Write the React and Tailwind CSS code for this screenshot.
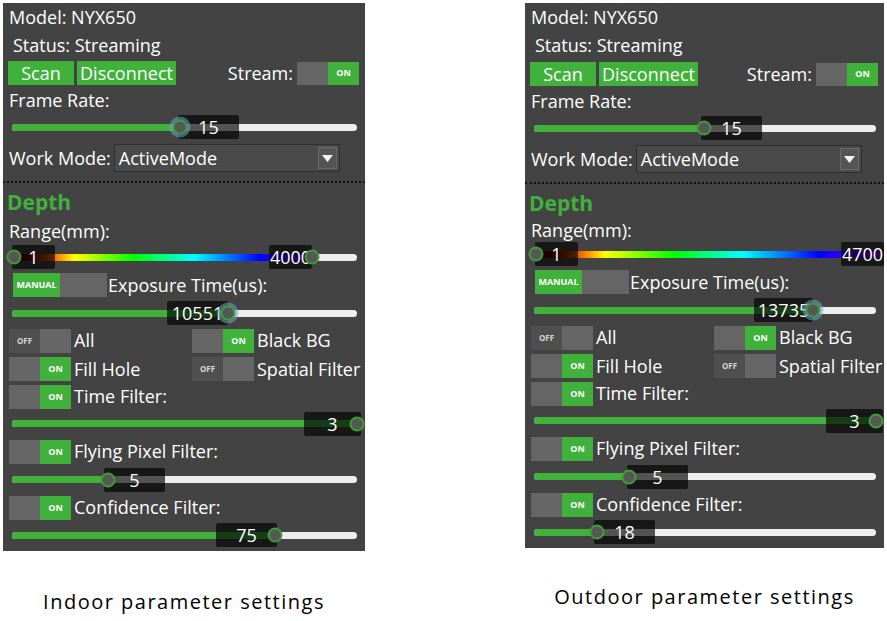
import React from 'react';

const GREEN = 'bg-[#40b13a]';

const LEFT = {
  w: 'w-[362px]',
  statusH: 'h-[28px]',
  depthH: 'h-[30px]',
  rangeH: 'h-[26px]',
  captionMt: 'mt-[36px]',
  frame: { pct: 48.7, box: 166, value: '15', glow: true },
  range: { to: 87, boxA: 0, boxB: 257, a: '1', b: '4000', showB: true },
  exposure: { pct: 62.6, box: 155, value: '10551', glow: true },
  time: { pct: 100, box: 292, value: '3', boxW: 57 },
  flying: { pct: 27.8, box: 92, value: '5' },
  confidence: { pct: 76.2, box: 204, value: '75' },
};

const RIGHT = {
  w: 'w-[359px]',
  statusH: 'h-[29px]',
  depthH: 'h-[30px]',
  rangeH: 'h-[22px]',
  captionMt: 'mt-[34px]',
  frame: { pct: 49.7, box: 167, value: '15' },
  range: { to: 101, boxA: 1, boxB: 307, a: '1', b: '4700', showB: false },
  exposure: { pct: 81.7, box: 220, value: '13735', glow: true, boxW: 59 },
  time: { pct: 100, box: 292, value: '3', boxW: 57 },
  flying: { pct: 27.9, box: 93, value: '5' },
  confidence: { pct: 18.3, box: 60, value: '18' },
};

// ─── SMALL PIECES ────────────────────────────────────────────────────────────
const Toggle = ({ on }) => (
  <div className="flex h-[24px] w-[62px] shrink-0">
    {on ? (
      <>
        <div className="flex-1 bg-[#656565]" />
        <div className={`flex-1 ${GREEN} flex items-center justify-center text-[9px] font-bold text-white`}>ON</div>
      </>
    ) : (
      <>
        <div className="flex-1 bg-[#4f4f4f] flex items-center justify-center text-[8px] font-bold text-[#d6d6d6]">OFF</div>
        <div className="flex-1 bg-[#666666]" />
      </>
    )}
  </div>
);

const Thumb = ({ left, glow }) => (
  <div
    className={`absolute top-1/2 -translate-x-1/2 -translate-y-1/2 w-[15px] h-[15px] rounded-full bg-[#575757] border-2 border-[#3b9f35]
      ${glow ? 'shadow-[0_0_0_3px_rgba(110,160,210,0.55)]' : ''}`}
    style={{ left: `${left}%` }}
  />
);

const ValueBox = ({ left, width = 61, children }) => (
  <div
    className="absolute top-1/2 -translate-y-1/2 h-[24px] rounded-[2px] bg-black/65 text-center leading-[24px] text-[18px] text-white whitespace-nowrap"
    style={{ left: `${left}px`, width: `${width}px` }}
  >
    {children}
  </div>
);

const Slider = ({ s, h = 'h-[26px]' }) => (
  <div className={`${h} flex items-center`}>
    <div className="relative ml-[9px] mr-[8px] flex-1 h-[7px] rounded-full bg-[#eeeeee]">
      <div className={`absolute left-0 top-0 h-full rounded-full ${GREEN}`} style={{ width: `${s.pct}%` }} />
      <ValueBox left={s.box} width={s.boxW}>{s.value}</ValueBox>
      <Thumb left={s.pct} glow={s.glow} />
    </div>
  </div>
);

const RangeSlider = ({ r }) => (
  <div className="h-[26px] flex items-center">
    <div className="relative ml-[9px] mr-[8px] flex-1 h-[7px] rounded-full bg-[#eeeeee]">
      <div
        className="absolute left-[2px] top-0 h-full bg-[linear-gradient(to_right,#3a0000_0%,#7a0a00_6%,#ff7a00_14%,#ffff00_20%,#00ff00_40%,#00ffff_60%,#0000ff_82%,#8000ff_100%)]"
        style={{ width: `${r.to}%` }}
      />
      <ValueBox left={r.boxA} width={43}>{r.a}</ValueBox>
      <ValueBox left={r.boxB} width={43}>{r.b}</ValueBox>
      <Thumb left={0.6} />
      {r.showB && <Thumb left={r.to} />}
    </div>
  </div>
);

const Label = ({ className = '', children }) => (
  <div className={`flex items-center whitespace-nowrap ${className}`}>{children}</div>
);

// ─── PANEL ───────────────────────────────────────────────────────────────────
const Panel = ({ cfg }) => (
  <div className={`${cfg.w} bg-[#434343] overflow-hidden text-white text-[18px] pb-[3px]`}>
    <Label className="h-[28px] pl-[6px]">Model: NYX650</Label>
    <Label className={`${cfg.statusH} pl-[10px]`}>Status: Streaming</Label>

    <div className="h-[28px] flex items-center pl-[5px] pr-[6px]">
      <div className={`h-[24px] w-[66px] ${GREEN} flex items-center justify-center`}>Scan</div>
      <div className={`ml-[3px] h-[24px] w-[99px] ${GREEN} flex items-center justify-center`}>Disconnect</div>
      <span className="ml-auto mr-[4px]">Stream:</span>
      <div className="flex h-[23px] w-[62px]">
        <div className="flex-1 bg-[#656565]" />
        <div className={`flex-1 ${GREEN} flex items-center justify-center text-[9px] font-bold`}>ON</div>
      </div>
    </div>

    <Label className="h-[27px] pl-[6px]">Frame Rate:</Label>
    <Slider s={cfg.frame} />

    <div className="h-[36px] flex items-center pl-[6px]">
      <span className="whitespace-nowrap">Work Mode:</span>
      <div className="ml-[3px] h-[28px] w-[226px] shrink-0 flex items-center border border-[#2f2f2f] bg-[#4a4a4a] pl-[4px] pr-[2px]">
        <span className="flex-1">ActiveMode</span>
        <div className="w-[19px] h-[22px] border border-[#6a6a6a] bg-[#545454] flex items-center justify-center">
          <svg width="11" height="7" viewBox="0 0 11 7"><path d="M0 0h11L5.5 7z" fill="#f2f2f2" /></svg>
        </div>
      </div>
    </div>

    <div className="h-[12px] flex items-center">
      <div className="w-full border-t-2 border-dotted border-[#111111]" />
    </div>

    <Label className={`${cfg.depthH} pl-[4px] text-[21px] font-bold text-[#40b13a]`}>Depth</Label>
    <Label className={`${cfg.rangeH} pl-[6px]`}>Range(mm):</Label>
    <RangeSlider r={cfg.range} />

    <div className="h-[30px] flex items-center pl-[10px]">
      <div className="flex h-[24px] w-[94px] shrink-0">
        <div className={`flex-1 ${GREEN} flex items-center justify-center text-[9px] font-bold`}>MANUAL</div>
        <div className="flex-1 bg-[#656565]" />
      </div>
      <span className="ml-[1px] whitespace-nowrap">Exposure Time(us):</span>
    </div>
    <Slider s={cfg.exposure} />

    <div className="h-[29px] flex items-center pl-[6px]">
      <div className="w-[183px] shrink-0 flex items-center gap-[3px]"><Toggle on={false} /><span>All</span></div>
      <div className="flex items-center gap-[3px]"><Toggle on /><span className="whitespace-nowrap">Black BG</span></div>
    </div>
    <div className="h-[28px] flex items-center pl-[6px]">
      <div className="w-[183px] shrink-0 flex items-center gap-[3px]"><Toggle on /><span>Fill Hole</span></div>
      <div className="flex items-center gap-[3px]"><Toggle on={false} /><span className="whitespace-nowrap">Spatial Filter</span></div>
    </div>
    <div className="h-[27px] flex items-center pl-[6px] gap-[3px]"><Toggle on /><span>Time Filter:</span></div>
    <Slider s={cfg.time} h="h-[27px]" />

    <div className="h-[29px] flex items-center pl-[6px] gap-[3px]"><Toggle on /><span>Flying Pixel Filter:</span></div>
    <Slider s={cfg.flying} h="h-[27px]" />

    <div className="h-[29px] flex items-center pl-[6px] gap-[3px]"><Toggle on /><span>Confidence Filter:</span></div>
    <Slider s={cfg.confidence} />
  </div>
);

// ─── PAGE ────────────────────────────────────────────────────────────────────
export default function App() {
  return (
    <div className="w-[887px] h-[621px] bg-white flex pt-[3px] pl-[3px] font-['Open_Sans',sans-serif]">
      <div className="flex flex-col items-center">
        <Panel cfg={LEFT} />
        <p className={`${LEFT.captionMt} text-[20px] tracking-[1.5px] text-black`}>Indoor parameter settings</p>
      </div>
      <div className="ml-[160px] flex flex-col items-center">
        <Panel cfg={RIGHT} />
        <p className={`${RIGHT.captionMt} text-[20px] tracking-[1.5px] text-black`}>Outdoor parameter settings</p>
      </div>
    </div>
  );
}
